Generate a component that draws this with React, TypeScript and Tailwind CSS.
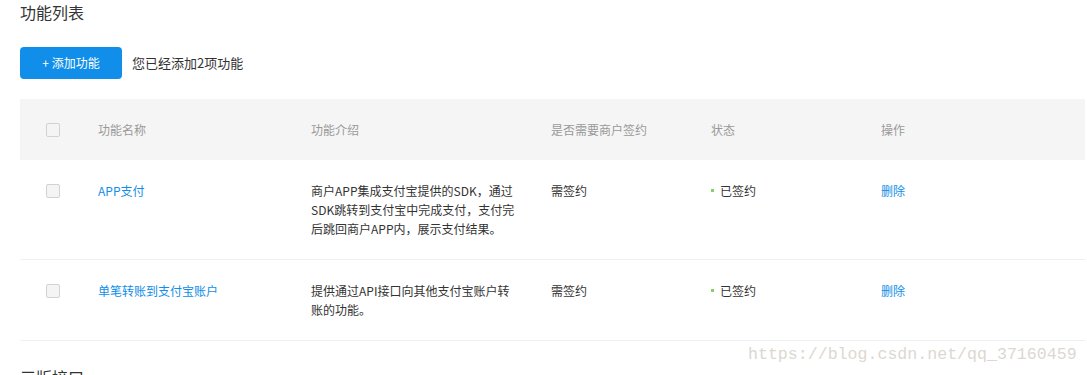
import React from 'react'

type Feature = {
  id: number
  name: string
  desc: string[]
  sign: string
  status: string
}

const FEATURES: Feature[] = [
  {
    id: 1,
    name: 'APP支付',
    desc: ['商户APP集成支付宝提供的SDK，通过', 'SDK跳转到支付宝中完成支付，支付完', '后跳回商户APP内，展示支付结果。'],
    sign: '需签约',
    status: '已签约',
  },
  {
    id: 2,
    name: '单笔转账到支付宝账户',
    desc: ['提供通过API接口向其他支付宝账户转', '账的功能。'],
    sign: '需签约',
    status: '已签约',
  },
]

const cols = 'grid grid-cols-[78px_213px_240px_160px_170px_1fr]'

const Checkbox = () => (
  <span className="block w-[14px] h-[14px] rounded-[2px] border border-[#d2d2d2] bg-[#f4f4f4]" />
)

const App = () => {
  return (
    <div
      className="relative w-[1087px] h-[375px] overflow-hidden bg-white pl-5 pr-[2px] text-[#333]"
      style={{ fontFamily: '"Noto Sans CJK SC", "Noto Sans", sans-serif' }}
    >
      <h2 className="text-[16px] leading-[24px] font-normal text-[#333]">功能列表</h2>

      <div className="flex items-center gap-[10px] mt-[23px]">
        <button className="w-[102px] h-[32px] rounded-[4px] bg-[#108ee9] text-white text-[12px] leading-none">
          + 添加功能
        </button>
        <span className="text-[13px]">您已经添加2项功能</span>
      </div>

      <div className="mt-[20px] text-[12px]">
        <div className={`${cols} h-[61px] items-center bg-[#f5f5f5] text-[#999]`}>
          <div className="pl-[26px]">
            <Checkbox />
          </div>
          <div>功能名称</div>
          <div>功能介绍</div>
          <div>是否需要商户签约</div>
          <div>状态</div>
          <div>操作</div>
        </div>

        {FEATURES.map((item) => (
          <div key={item.id} className={`${cols} items-start py-[21px] border-b border-[#f0f0f0] leading-[19px]`}>
            <div className="pl-[26px] h-[19px] flex items-center">
              <Checkbox />
            </div>
            <div className="text-[#108ee9]">{item.name}</div>
            <div>
              {item.desc.map((line) => (
                <div key={line}>{line}</div>
              ))}
            </div>
            <div>{item.sign}</div>
            <div className="h-[19px] flex items-center gap-[6px]">
              <span className="w-[3px] h-[3px] bg-[#87d068]" />
              {item.status}
            </div>
            <div className="text-[#108ee9]">删除</div>
          </div>
        ))}
      </div>

      <h2 className="mt-[24px] text-[16px] leading-[24px] font-normal text-[#333]">三版接口</h2>

      <div
        className="absolute left-[748px] top-[343px] text-[16.6px] leading-[24px] text-[#dcd8d0]"
        style={{ fontFamily: '"Liberation Mono", monospace' }}
      >
        https://blog.csdn.net/qq_37160459
      </div>
    </div>
  )
}

export default App
